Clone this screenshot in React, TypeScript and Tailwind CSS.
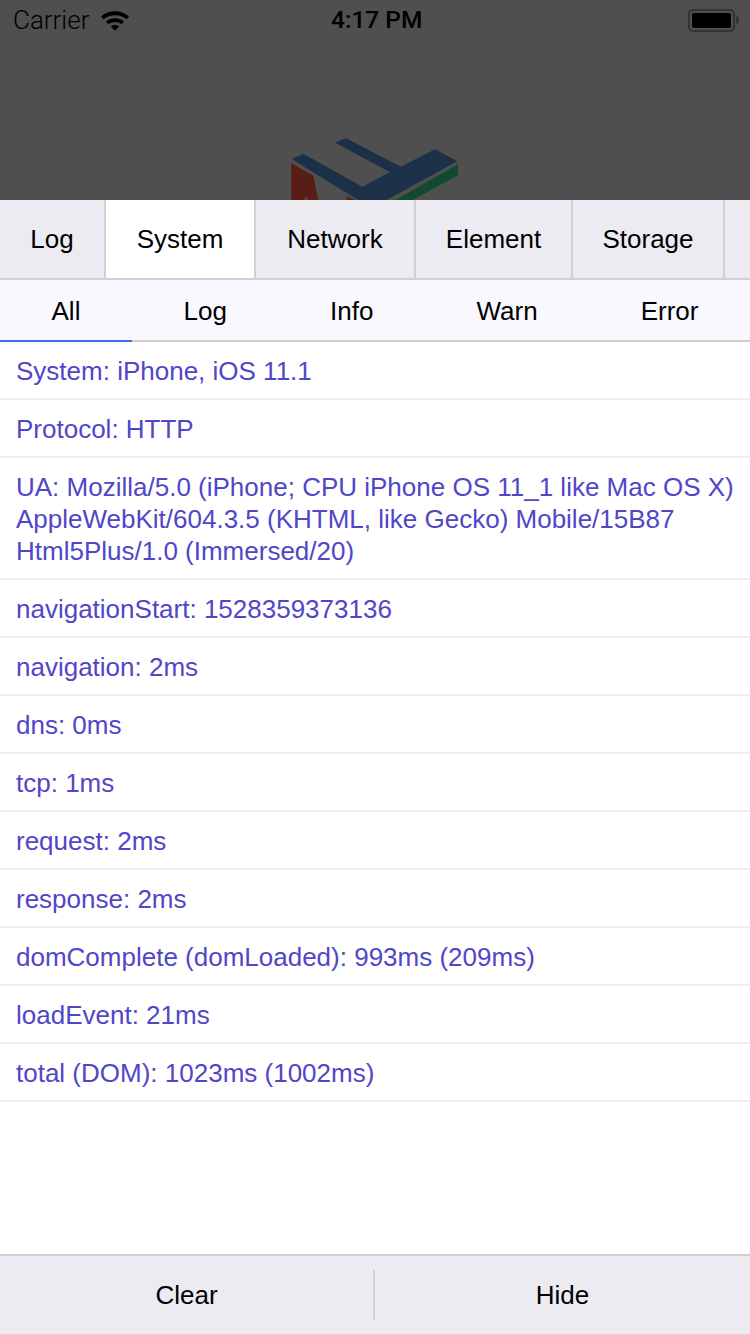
import React from "react";

const MAIN_TABS = [
  { name: "Log", width: "w-[106px]" },
  { name: "System", width: "w-[150px]" },
  { name: "Network", width: "w-[160px]" },
  { name: "Element", width: "w-[157px]" },
  { name: "Storage", width: "w-[152px]" },
];
const SUB_TABS = ["All", "Log", "Info", "Warn", "Error"];

const ROWS = [
  "System: iPhone, iOS 11.1",
  "Protocol: HTTP",
  "UA: Mozilla/5.0 (iPhone; CPU iPhone OS 11_1 like Mac OS X) AppleWebKit/604.3.5 (KHTML, like Gecko) Mobile/15B87 Html5Plus/1.0 (Immersed/20)",
  "navigationStart: 1528359373136",
  "navigation: 2ms",
  "dns: 0ms",
  "tcp: 1ms",
  "request: 2ms",
  "response: 2ms",
  "domComplete (domLoaded): 993ms (209ms)",
  "loadEvent: 21ms",
  "total (DOM): 1023ms (1002ms)",
];

function WifiIcon() {
  return (
    <svg width="30" height="22" viewBox="0 0 30 22" className="ml-[11px]">
      <path d="M1 7.5C8.5 .5 21.5 .5 29 7.5L26.5 10.2C20.5 4.8 9.5 4.8 3.5 10.2Z" fill="#000" />
      <path d="M6 12.6C11 8.2 19 8.2 24 12.6L21.5 15.3C17.8 12.1 12.2 12.1 8.5 15.3Z" fill="#000" />
      <path d="M10.8 17.4C13.2 15.4 16.8 15.4 19.2 17.4L15 21.8Z" fill="#000" />
    </svg>
  );
}

function Battery() {
  return (
    <div className="flex items-center">
      <div className="w-[47px] h-[23px] rounded-[5px] border-2 border-[#333333] p-[2px]">
        <div className="w-full h-full rounded-[2px] bg-black" />
      </div>
      <div className="w-[3px] h-[8px] ml-[1px] rounded-r-[3px] bg-[#333333]" />
    </div>
  );
}

function Logo() {
  return (
    <svg width="170" height="62" viewBox="290 138 170 62">
      <polygon
        points="291.7,159 303.3,153.7 362.3,186.7 390,172.3 335,142.7 345.7,138 400.7,166.7 435,149.3 457.3,161.3 386.7,200 358,200"
        fill="#1c3148"
      />
      <polygon points="458,164 458,175 413,200 395.7,200" fill="#114a30" />
      <polygon points="291.3,163.3 313.3,175.7 318.3,200 307.3,200 307.3,196 303.3,200 291.3,200" fill="#581d14" />
      <polygon points="346.7,196 355,200 346.7,200" fill="#581d14" />
    </svg>
  );
}

export default function App() {
  return (
    <div className="w-[750px] h-[1334px] flex flex-col bg-white text-[26px] leading-[32px] text-black font-['Liberation_Sans',Arial,sans-serif] overflow-hidden">
      <div className="h-[200px] flex flex-col bg-[#4f4f4f]">
        <div className="h-[40px] relative flex items-center justify-between pl-[13px] pr-[11px] text-[26px] font-['Roboto',sans-serif] font-light">
          <div className="flex items-center">
            <span>Carrier</span>
            <WifiIcon />
          </div>
          <span className="absolute left-[331px] top-[4px] text-[24.5px] font-medium">4:17 PM</span>
          <Battery />
        </div>
        <div className="flex-1 flex justify-center items-end overflow-hidden">
          <Logo />
        </div>
      </div>

      <div className="h-[80px] flex bg-[#ebebf1] border-b-2 border-[#d0d0d0]">
        {MAIN_TABS.map((tab) => (
          <div
            key={tab.name}
            className={`${tab.width} flex items-center justify-center border-r-2 border-[#d0d0d0] ${tab.name === "System" ? "bg-white" : ""}`}
          >
            {tab.name}
          </div>
        ))}
      </div>

      <div className="h-[62px] flex bg-[#f9f8fe] border-b-2 border-[#d0d0d0]">
        {SUB_TABS.map((tab, i) => (
          <div
            key={tab}
            className={`flex-auto flex items-center justify-center h-[62px] pt-[2px] border-b-2 ${i === 0 ? "border-[#3a6ff0]" : "border-transparent"}`}
          >
            {tab}
          </div>
        ))}
      </div>

      <div className="flex-1 flex flex-col">
        {ROWS.map((row) => (
          <div key={row} className="px-[16px] pt-[13px] pb-[11px] border-b-2 border-[#eeeeee] text-[#5046c8]">
            {row}
          </div>
        ))}
      </div>

      <div className="h-[80px] flex items-center bg-[#ebebf1] border-t-2 border-[#d0d0d0]">
        <div className="w-[373px] h-[50px] flex items-center justify-center">Clear</div>
        <div className="w-[2px] h-[50px] bg-[#d0d0d0]" />
        <div className="flex-1 h-[50px] flex items-center justify-center">Hide</div>
      </div>
    </div>
  );
}
